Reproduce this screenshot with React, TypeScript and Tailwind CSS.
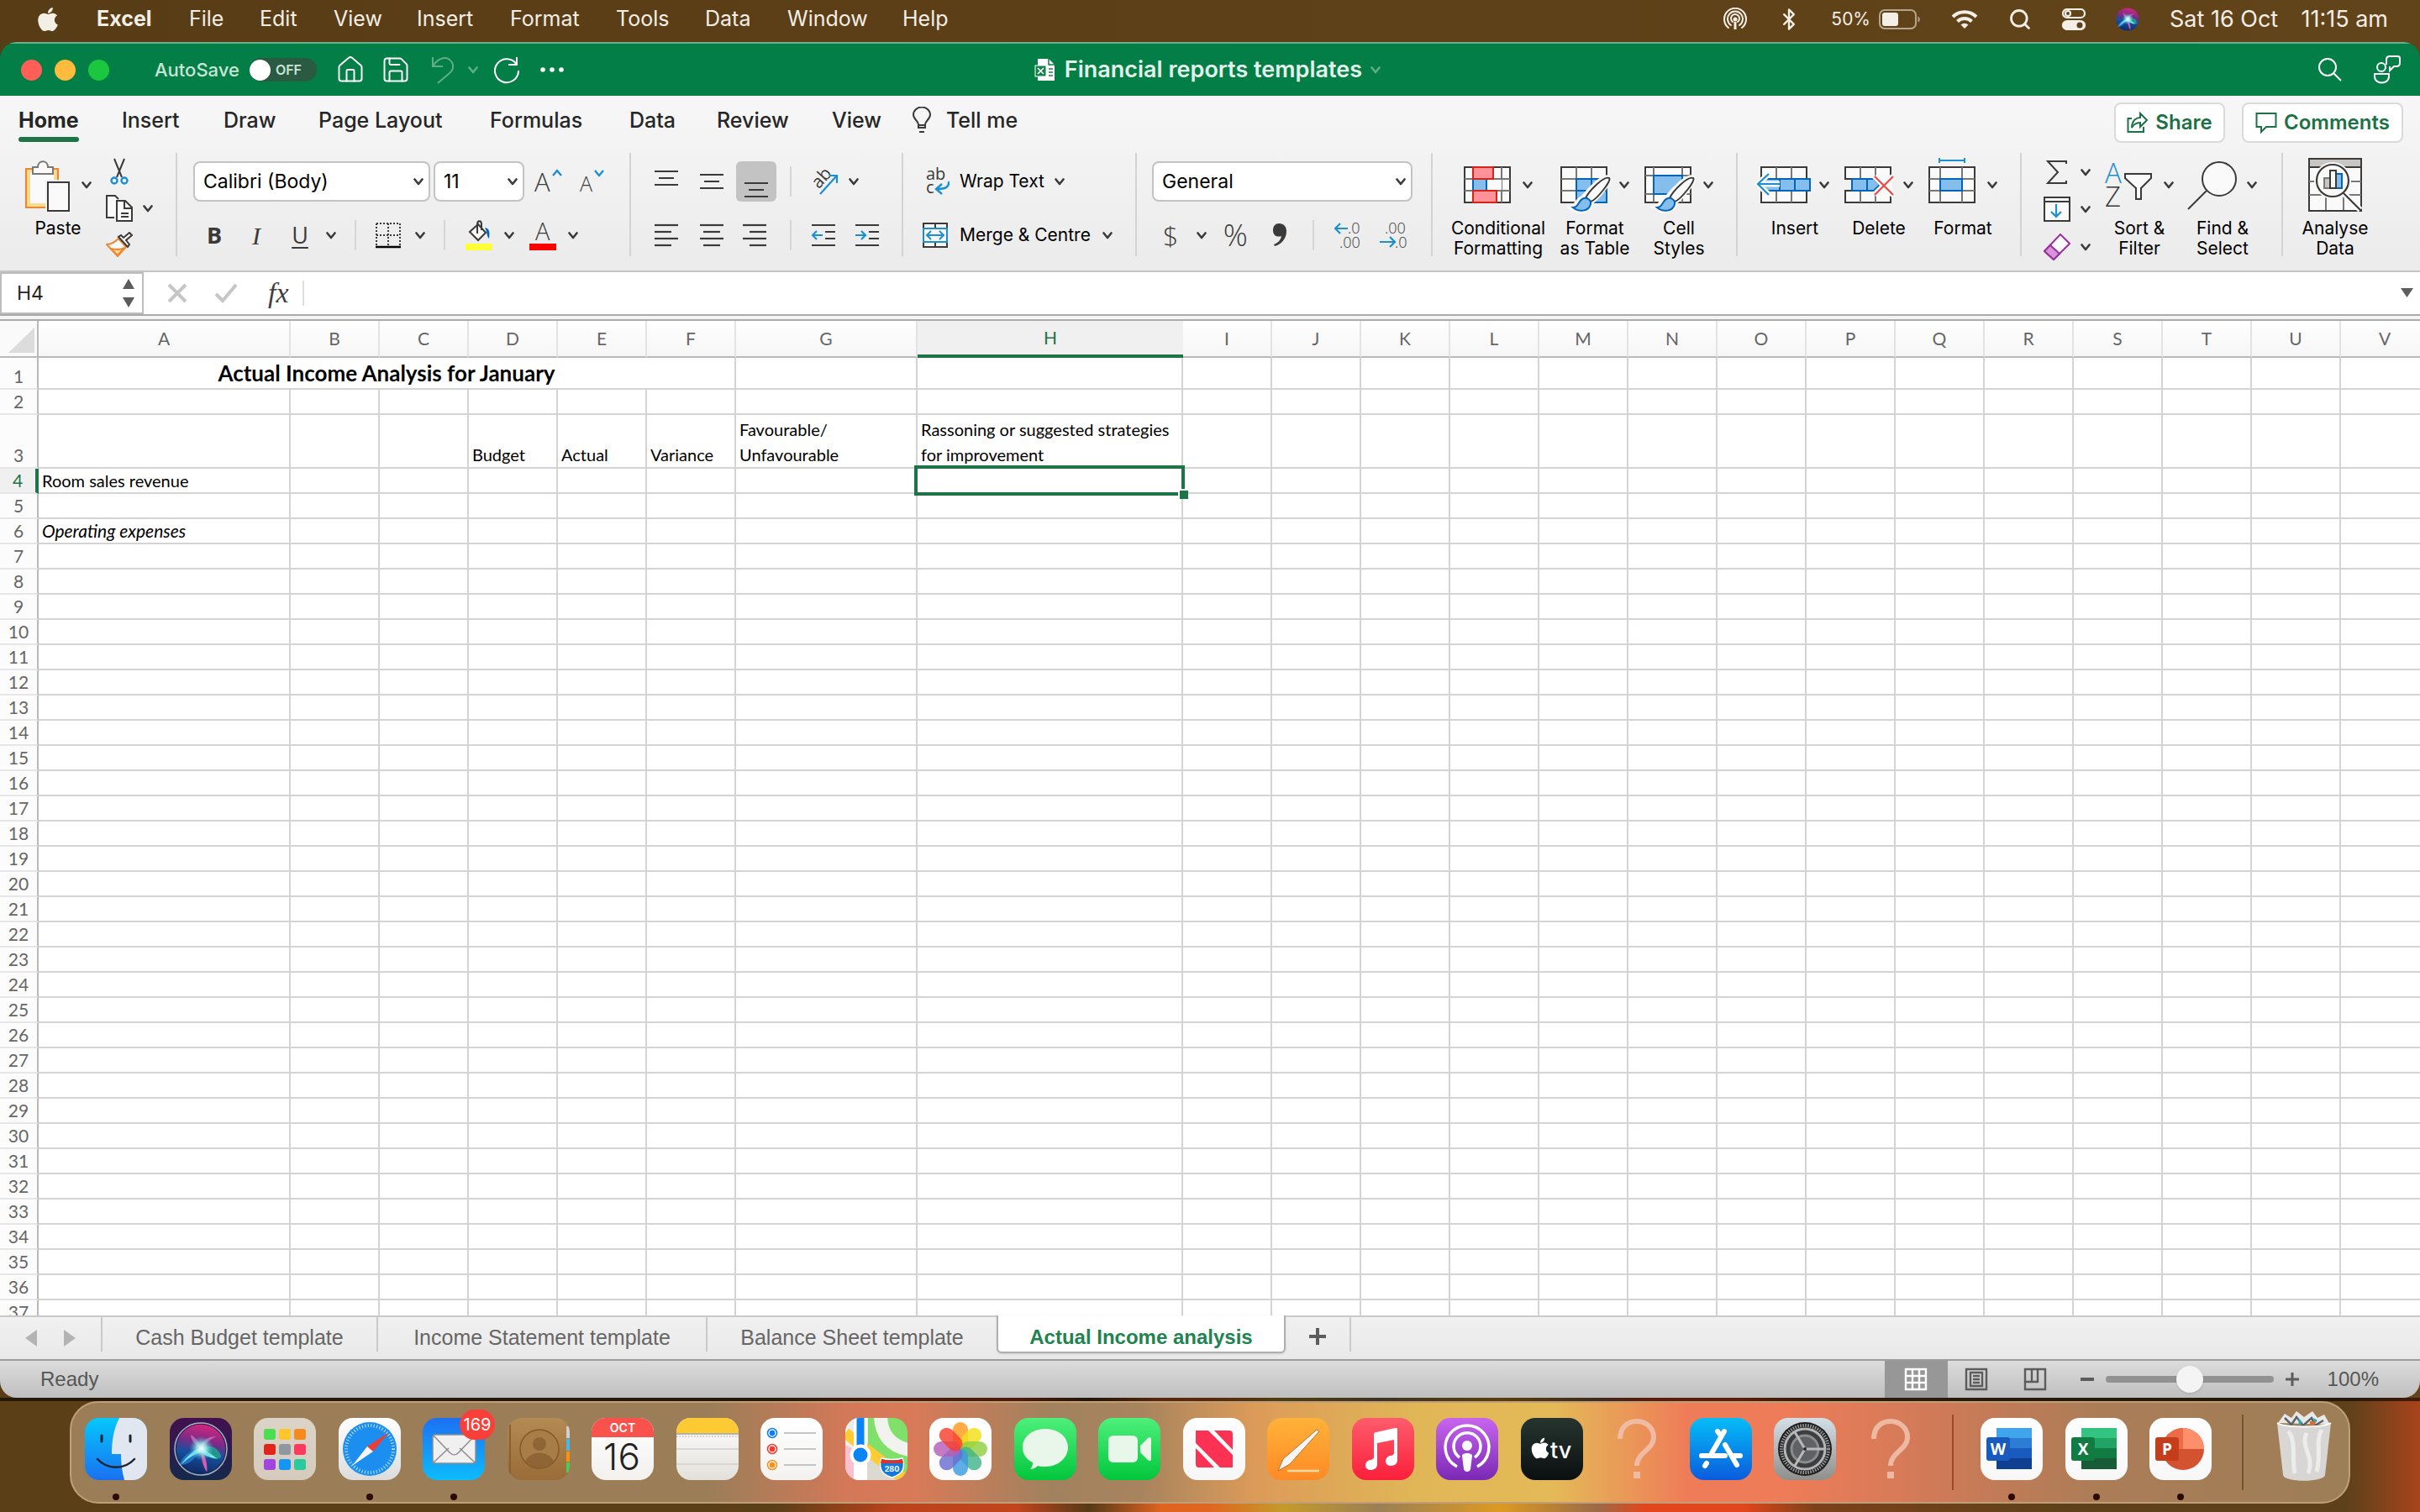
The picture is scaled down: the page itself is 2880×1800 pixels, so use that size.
import { useState, type ReactNode } from "react";
import { FaApple } from "react-icons/fa";
import { Bluetooth, House, Save, Search } from "lucide-react";

interface WidthItem {
  label: string;
  width: string;
}

const DARK = "#3b3a39";
const GREY = "#7a7875";
const PAPER = "#fafafa";
const BLUE = "#1a8fd1";
const NAVY = "#0364b8";
const SKY = "#83beec";

const menus: WidthItem[] = [
  { label: "File", width: "w-[84px]" },
  { label: "Edit", width: "w-[88px]" },
  { label: "View", width: "w-[99px]" },
  { label: "Insert", width: "w-[111px]" },
  { label: "Format", width: "w-[126px]" },
  { label: "Tools", width: "w-[106px]" },
  { label: "Data", width: "w-[98px]" },
  { label: "Window", width: "w-[137px]" },
  { label: "Help", width: "w-[80px]" },
];

const ribbonTabs: WidthItem[] = [
  { label: "Insert", width: "w-[121px]" },
  { label: "Draw", width: "w-[113px]" },
  { label: "Page Layout", width: "w-[204px]" },
  { label: "Formulas", width: "w-[166px]" },
  { label: "Data", width: "w-[104px]" },
  { label: "Review", width: "w-[137px]" },
  { label: "View", width: "w-[96px]" },
];

const columns: WidthItem[] = "ABCDEFGHIJKLMNOPQRSTUV".split("").map((label) => ({
  label,
  width: label === "A" ? "w-[300px]" : label === "G" ? "w-[216px]" : label === "H" ? "w-[316px]" : "w-[106px]",
}));

const cells: Record<string, string> = {
  D3: "Budget",
  E3: "Actual",
  F3: "Variance",
  G3: "Favourable/ Unfavourable",
  H3: "Rassoning or suggested strategies for improvement",
  A4: "Room sales revenue",
  A6: "Operating expenses",
};

/* ---------- small shared pieces ---------- */

function Chevron({ color = DARK }: { color?: string }) {
  return (
    <svg width="12" height="9" viewBox="0 0 12 9" className="shrink-0" fill="none">
      <path d="M1.500 1.500 6 7l4.500-5.500" stroke={color} strokeWidth="2.600" strokeLinecap="round" strokeLinejoin="round" />
    </svg>
  );
}

function Group({ className, children }: { className: string; children: ReactNode }) {
  return <div className={`h-[123px] shrink-0 border-r-2 border-[#d3d3d3] ${className}`}>{children}</div>;
}

function Divider() {
  return <div className="h-9 w-0.5 shrink-0 bg-[#d6d6d6]" />;
}

function BigButton({
  width,
  lines,
  arrow = true,
  iconWidth = 56,
  children,
}: {
  width: string;
  lines: string[];
  arrow?: boolean;
  iconWidth?: number;
  children: ReactNode;
}) {
  return (
    <button type="button" className={`flex shrink-0 flex-col items-center pt-1.5 ${width}`}>
      <span className="flex h-16 items-center gap-3.5">
        <svg width={iconWidth} height="64" viewBox={`0 0 ${iconWidth} 64`} className="overflow-visible" fill="none">
          {children}
        </svg>
        {arrow && <Chevron />}
      </span>
      <span className="mt-2 text-center text-[21px] leading-6 whitespace-nowrap text-black">
        {lines.map((line) => (
          <span key={line} className="block">
            {line}
          </span>
        ))}
      </span>
    </button>
  );
}

function PickList({ label, value, options, width }: { label: string; value: string; options: string[]; width: string }) {
  return (
    <label className={`relative block h-12 shrink-0 ${width}`}>
      <span className="sr-only">{label}</span>
      <select
        defaultValue={value}
        className="h-full w-full appearance-none rounded-lg border-2 border-[#c3c3c3] bg-white pl-2.5 text-[23px] text-black"
      >
        {options.map((option) => (
          <option key={option}>{option}</option>
        ))}
      </select>
      <span className="pointer-events-none absolute top-5 right-2">
        <Chevron />
      </span>
    </label>
  );
}

function AlignIcon({ rows }: { rows: [number, number][] }) {
  return (
    <svg width="28" height="28" viewBox="0 0 28 28" stroke={DARK} strokeWidth="2.200">
      {rows.map(([x, w], i) => (
        <path key={i} d={`M${x} ${2 + i * 8}h${w}`} />
      ))}
    </svg>
  );
}

function Brush() {
  return (
    <g>
      <path d="M59 23c4 3-16 27-22 30-1 12-16 14-26 6 8-1 7-9 15-12C34 37 52 18 59 23z" fill={PAPER} stroke={PAPER} strokeWidth="4" />
      <path d="M58 24c4 2-15 26-22 28l-6-4c4-9 22-27 28-24z" fill={PAPER} stroke={DARK} strokeWidth="2" />
      <path d="M15 59c7 0 6-9 13-11 5-1 9 3 8 7-2 9-14 10-21 4z" fill={SKY} stroke={NAVY} strokeWidth="2" />
    </g>
  );
}

/* ---------- mac menu bar ---------- */

function MenuBar() {
  return (
    <header className="flex h-[50px] shrink-0 items-center pb-1 pl-[43px] pr-[38px] text-[25px] text-[#f3eee6]">
      <FaApple className="mr-11 h-8 w-7" />
      <button type="button" className="w-[110px] text-left font-bold">
        Excel
      </button>
      <nav className="flex">
        {menus.map((m) => (
          <button type="button" key={m.label} className={`text-left ${m.width}`}>
            {m.label}
          </button>
        ))}
      </nav>
      <div className="ml-auto flex items-center gap-9">
        <svg width="28" height="28" viewBox="0 0 28 28" fill="none" stroke="currentColor" strokeWidth="2">
          <path d="M6 24a13 13 0 1 1 16 0M9 21a9 9 0 1 1 10 0M11 17a5 5 0 1 1 6 0" strokeLinecap="round" />
          <circle cx="14" cy="14" r="1.500" fill="currentColor" />
          <path d="M14 17v9" strokeWidth="3" />
        </svg>
        <Bluetooth className="h-8 w-7" strokeWidth={2} />
        <div className="flex items-center gap-2.5 text-[21px]">
          50%
          <svg width="50" height="24" viewBox="0 0 50 24" fill="none">
            <rect x="1" y="1" width="43" height="22" rx="6" stroke="#b5a58e" strokeWidth="2" />
            <rect x="4" y="4" width="19" height="16" rx="3" fill="#f3eee6" />
            <path d="M46.500 8.500c3 1 3 6 0 7z" fill="#b5a58e" />
          </svg>
        </div>
        <svg width="32" height="24" viewBox="0 0 32 24" fill="none" stroke="currentColor" strokeWidth="4">
          <path d="M2 9a20 20 0 0 1 28 0M7.500 14.500a12 12 0 0 1 17 0" />
          <path d="m16 23-4.500-4.500a6.500 6.500 0 0 1 9 0z" fill="currentColor" stroke="none" />
        </svg>
        <Search className="h-7 w-7" strokeWidth={2.4} />
        <svg width="28" height="26" viewBox="0 0 28 26" fill="none" stroke="currentColor" strokeWidth="2.200">
          <rect x="1" y="1" width="26" height="10" rx="5" />
          <circle cx="7" cy="6" r="3" />
          <rect x="1" y="15" width="26" height="10" rx="5" fill="currentColor" />
          <circle cx="21" cy="20" r="3.500" fill="#5d411a" stroke="none" />
        </svg>
        <svg width="28" height="28" viewBox="0 0 74 74">
          <SiriOrb id="menuSiri" />
        </svg>
        <div className="flex w-[260px] justify-between text-[27px]">
          <span>Sat 16 Oct</span>
          <span>11:15 am</span>
        </div>
      </div>
    </header>
  );
}

/* ---------- window title bar ---------- */

function TitleBar() {
  return (
    <div className="flex h-16 shrink-0 items-center border-t-2 border-[#6fae8d] bg-[#037e46] pr-[22px] pl-[25px] text-white">
      <div className="flex gap-[15px]">
        <button type="button" aria-label="Close" className="size-[25px] rounded-full bg-[#ff5f57]" />
        <button type="button" aria-label="Minimise" className="size-[25px] rounded-full bg-[#febb3d]" />
        <button type="button" aria-label="Zoom" className="size-[25px] rounded-full bg-[#1ac73f]" />
      </div>
      <label className="ml-[54px] flex items-center gap-3 text-[22px] font-medium text-[#c9e5d6]">
        AutoSave
        <input type="checkbox" role="switch" className="sr-only" />
        <span className="flex h-7 w-20 items-center rounded-full bg-[#2a5a42] text-[16px] font-semibold">
          <span className="mr-1.5 size-[25px] rounded-full bg-white" />
          OFF
        </span>
      </label>
      <div className="ml-[22px] flex items-center">
        <button type="button" aria-label="Home">
          <House className="mr-[18px] size-9" strokeWidth={1.3} />
        </button>
        <button type="button" aria-label="Save">
          <Save className="mr-6 size-9" strokeWidth={1.3} />
        </button>
        <button type="button" aria-label="Undo" className="flex items-center gap-4">
          <svg width="28" height="34" viewBox="0 0 28 34" fill="none" stroke="#5fae88" strokeWidth="2">
            <path d="M2 2v11h12M2 13C8 3 17 1 22 5c6 5 5 12 0 16L8 33" />
          </svg>
          <Chevron color="#5fae88" />
        </button>
        <button type="button" aria-label="Repeat" className="mr-6 ml-[18px]">
          <svg width="32" height="34" viewBox="0 0 32 34" fill="none" stroke="white" strokeWidth="2">
            <path d="M28 11a14 14 0 1 0 2 7M28 2v9H18" />
          </svg>
        </button>
        <button type="button" aria-label="More">
          <svg width="28" height="6" fill="white">
            <circle cx="3" cy="3" r="2.800" />
            <circle cx="14" cy="3" r="2.800" />
            <circle cx="25" cy="3" r="2.800" />
          </svg>
        </button>
      </div>
      <h1 className="mx-auto flex items-center gap-2.5 text-[27px] font-semibold text-[#e3f2ea]">
        <svg width="26" height="28" viewBox="0 0 26 28">
          <path d="M4 1h13l7 7v19H4z" fill="#fff" />
          <path d="M17 1v7h7" fill="none" stroke="#037e46" strokeWidth="1.500" />
          <rect x="1" y="9" width="13" height="13" fill="#14804a" stroke="#fff" />
          <path d="m4 12 7 7M11 12l-7 7" stroke="#fff" strokeWidth="1.600" />
          <path d="M17 13h5M17 17h5M17 21h5" stroke="#14804a" strokeWidth="1.600" />
        </svg>
        Financial reports templates
        <Chevron color="#5fae88" />
      </h1>
      <div className="flex w-[655px] items-center justify-end gap-9">
        <button type="button" aria-label="Search">
          <svg width="30" height="30" viewBox="0 0 30 30" fill="none" stroke="white" strokeWidth="2">
            <circle cx="12" cy="12" r="10" />
            <path d="m19 19 9 9" />
          </svg>
        </button>
        <button type="button" aria-label="Presence">
          <svg width="34" height="34" viewBox="0 0 34 34" fill="none" stroke="white" strokeWidth="2">
            <circle cx="10" cy="14" r="5" />
            <path d="M2 22h17v3c0 10-17 10-17 0z" />
            <path d="M16 11V5c0-3 1-4 4-4h9c3 0 3 1 3 4v4c0 3-1 4-4 4h-3l-5 5v-5" />
          </svg>
        </button>
      </div>
    </div>
  );
}

/* ---------- ribbon ---------- */

function RibbonTabs() {
  return (
    <div className="flex h-[62px] items-start pr-5 pl-[22px] text-[25px] text-[#262626]">
      <nav className="flex pt-[11px]">
        <div className="w-[123px]">
          <button type="button" className="leading-9 font-bold">
            Home
            <span className="mt-0.5 block h-1.5 rounded-full bg-[#1e7347]" />
          </button>
        </div>
        {ribbonTabs.map((tab) => (
          <button type="button" key={tab.label} className={`self-start text-left leading-9 font-medium ${tab.width}`}>
            {tab.label}
          </button>
        ))}
        <button type="button" className="flex items-center gap-[18px] self-start leading-9 font-medium">
          <svg width="22" height="32" viewBox="0 0 22 32" fill="none" stroke={DARK} strokeWidth="2">
            <path d="M7 25v-4C7 17 1 15 1 9.500a10 9 0 0 1 20 0C21 15 15 17 15 21v4zM7 22h8M8 30h6" />
          </svg>
          Tell me
        </button>
      </nav>
      <div className="ml-auto flex gap-5 pt-2 text-[24px] font-semibold text-[#1c7145]">
        <button type="button" className="flex h-12 w-[132px] items-center justify-center gap-2 rounded-lg border-2 border-[#dadada] bg-white">
          <svg width="26" height="26" viewBox="0 0 26 26" fill="none" stroke="currentColor" strokeWidth="2">
            <path d="M6 8H1.500v16H20v-6M16 2l8 8-8 8v-5c-5 0-8 2-10 6 0-7 4-12 10-12z" />
          </svg>
          Share
        </button>
        <button type="button" className="flex h-12 w-[192px] items-center justify-center gap-2 rounded-lg border-2 border-[#dadada] bg-white">
          <svg width="26" height="26" viewBox="0 0 26 26" fill="none" stroke="currentColor" strokeWidth="2">
            <path d="M1.500 2h23v16H13l-6 6v-6H1.500z" />
          </svg>
          Comments
        </button>
      </div>
    </div>
  );
}

function ClipboardGroup() {
  return (
    <Group className="flex w-[211px] pl-7">
      <BigButton width="w-[82px]" lines={["Paste"]} iconWidth={54}>
        <path d="M2 13h38v46H2z" fill="#f8db8f" stroke="#ee8733" strokeWidth="2.200" />
        <path d="M7 17h28v37H7z" fill={PAPER} />
        <path d="M10 11h6c0-9 12-9 12 0h6v8H10z" fill={PAPER} stroke={GREY} strokeWidth="2" />
        <path d="M25 26h32v40H25z" fill="#f1f1f1" />
        <path d="M28 29h25v34H28z" fill={PAPER} stroke={DARK} strokeWidth="2" />
      </BigButton>
      <div className="flex flex-col gap-3 pt-1.5 pl-4">
        <button type="button" aria-label="Cut">
          <svg width="32" height="32" viewBox="0 0 32 32" fill="none" strokeWidth="2">
            <path d="m10 1 9 22M22 1l-9 22" stroke={DARK} />
            <circle cx="10" cy="27" r="3.500" stroke={BLUE} strokeWidth="2.400" />
            <circle cx="22" cy="27" r="3.500" stroke={BLUE} strokeWidth="2.400" />
          </svg>
        </button>
        <button type="button" aria-label="Copy" className="flex items-center gap-3">
          <svg width="32" height="32" viewBox="0 0 32 32" fill={PAPER} stroke={DARK} strokeWidth="2">
            <path d="M10 27H1V1h10l4 4" />
            <path d="M13 7h10l8 8v16H13z" />
            <path d="M22 7v9h9M18 22h9M18 26h9" fill="none" />
          </svg>
          <Chevron />
        </button>
        <button type="button" aria-label="Format Painter">
          <svg width="32" height="30" viewBox="0 0 32 30" strokeWidth="2">
            <path d="M1 15c5 0 10-3 14-7l9 10-10 11z" fill={PAPER} stroke="#ee8733" />
            <path d="M6 20c6 1 11 2 16-1l-8 9z" fill="#f8db8f" stroke="#ee8733" />
            <path d="m15 6 11 12 2-3-4-5 7-6-3-3-7 6-3-3z" fill={PAPER} stroke={DARK} />
          </svg>
        </button>
      </div>
    </Group>
  );
}

function FontGroup() {
  return (
    <Group className="w-[540px] pt-2.5 pl-[19px]">
      <div className="flex items-center">
        <PickList label="Font" value="Calibri (Body)" options={["Calibri (Body)", "Arial"]} width="mr-1 w-[282px]" />
        <PickList label="Font size" value="11" options={["11", "12", "14"]} width="mr-3 w-[108px]" />
        <button type="button" aria-label="Increase font size" className="mr-[18px]">
          <svg width="34" height="36" viewBox="0 0 34 36" fill="none">
            <text x="0" y="30" fontSize="31" fontFamily="Open Sans" fontWeight="300" fill={DARK}>A</text>
            <path d="m22 11 5-6 5 6" stroke={BLUE} strokeWidth="2.400" />
          </svg>
        </button>
        <button type="button" aria-label="Decrease font size">
          <svg width="34" height="36" viewBox="0 0 34 36" fill="none">
            <text x="2" y="30" fontSize="25" fontFamily="Open Sans" fontWeight="300" fill={DARK}>A</text>
            <path d="m20 5 5 6 5-6" stroke={BLUE} strokeWidth="2.400" />
          </svg>
        </button>
      </div>
      <div className="mt-5 flex h-10 items-center pl-1.5 font-[Open_Sans] text-[27px] text-[#3b3a39]">
        <button type="button" className="w-[38px] font-bold" aria-label="Bold">B</button>
        <button type="button" className="ml-3 w-[38px] font-[Liberation_Serif] text-[30px] italic" aria-label="Italic">I</button>
        <button type="button" className="ml-3.5 w-[38px] underline decoration-2 underline-offset-4" aria-label="Underline">U</button>
        <button type="button" aria-label="Underline styles" className="mr-[22px] ml-3"><Chevron /></button>
        <Divider />
        <button type="button" aria-label="Borders" className="mr-[22px] ml-[22px] flex items-center gap-4">
          <svg width="32" height="32" viewBox="0 0 32 32" fill="none">
            <path d="M2 2h28M2 16h28M2 2v26M16 2v26M30 2v26" stroke={DARK} strokeWidth="2" strokeDasharray="2 2" />
            <path d="M1 30h30" stroke="#000" strokeWidth="2.500" />
          </svg>
          <Chevron />
        </button>
        <Divider />
        <button type="button" aria-label="Fill colour" className="mr-[18px] ml-6 flex items-center gap-3.5">
          <svg width="32" height="36" viewBox="0 0 32 36" fill="none">
            <path d="m5 14 10-9 9 10-9 9z" fill={PAPER} stroke={DARK} strokeWidth="2" />
            <path d="M14 16V5c0-5 5-5 5 0v7" stroke={DARK} strokeWidth="2" />
            <path d="M23 9c6 1 6 6 5 13-3-2-2-8-5-13z" fill={NAVY} />
            <path d="M0 28h32v8H0z" fill="#ffff38" />
          </svg>
          <Chevron />
        </button>
        <button type="button" aria-label="Font colour" className="flex items-center gap-3.5">
          <svg width="32" height="36" viewBox="0 0 32 36">
            <text x="7" y="24" fontSize="29" fontFamily="Open Sans" fontWeight="300" fill={DARK}>A</text>
            <path d="M0 28h32v8H0z" fill="#f00" />
          </svg>
          <Chevron />
        </button>
      </div>
    </Group>
  );
}

function AlignmentGroup() {
  return (
    <Group className="w-[324px] pt-2.5 pl-5">
      <div className="flex h-12 items-center">
        <button type="button" aria-label="Top align" className="w-[54px] pl-2"><AlignIcon rows={[[0, 28], [5, 18], [0, 28]]} /></button>
        <button type="button" aria-label="Middle align" className="w-[51px] pt-2 pl-2"><AlignIcon rows={[[0, 28], [5, 18], [0, 28]]} /></button>
        <button type="button" aria-label="Bottom align" className="mr-4 h-12 w-12 rounded-md bg-[#c3c3c3] pt-6 pl-2.5"><AlignIcon rows={[[0, 28], [5, 18], [0, 28]]} /></button>
        <Divider />
        <button type="button" aria-label="Orientation" className="ml-[22px] flex items-center gap-3">
          <svg width="34" height="34" viewBox="0 0 34 34" fill="none">
            <text x="4" y="24" fontSize="21" fontFamily="Open Sans" fill={DARK} transform="rotate(-48 10 18)">ab</text>
            <path d="m12 32 20-22M23 10h9v9" stroke={BLUE} strokeWidth="2.200" />
          </svg>
          <Chevron />
        </button>
      </div>
      <div className="mt-5 flex h-10 items-center">
        <button type="button" aria-label="Align left" className="w-[54px] pl-2"><AlignIcon rows={[[0, 28], [0, 20], [0, 28], [0, 20]]} /></button>
        <button type="button" aria-label="Centre" className="w-[51px] pl-2"><AlignIcon rows={[[0, 28], [4, 20], [0, 28], [4, 20]]} /></button>
        <button type="button" aria-label="Align right" className="mr-4 w-12 pl-2"><AlignIcon rows={[[0, 28], [8, 20], [0, 28], [8, 20]]} /></button>
        <Divider />
        <button type="button" aria-label="Decrease indent" className="mr-6 ml-6">
          <svg width="28" height="28" viewBox="0 0 28 28" fill="none" stroke={DARK} strokeWidth="2.200">
            <path d="M0 2h28M16 10h12M16 18h12M0 26h28" />
            <path d="M13 14H1M6 9l-5 5 5 5" stroke={BLUE} />
          </svg>
        </button>
        <button type="button" aria-label="Increase indent">
          <svg width="28" height="28" viewBox="0 0 28 28" fill="none" stroke={DARK} strokeWidth="2.200">
            <path d="M0 2h28M16 10h12M16 18h12M0 26h28" />
            <path d="M0 14h12M7 9l5 5-5 5" stroke={BLUE} />
          </svg>
        </button>
      </div>
    </Group>
  );
}

function WrapGroup() {
  return (
    <Group className="w-[278px] pt-2.5 pl-[23px] text-[21px] text-black">
      <button type="button" className="flex h-12 items-center gap-3">
        <svg width="32" height="34" viewBox="0 0 32 34" fill="none">
          <text x="4" y="15" fontSize="20" fontFamily="Open Sans" fill={DARK}>ab</text>
          <text x="4" y="31" fontSize="20" fontFamily="Open Sans" fill={DARK}>c</text>
          <path d="M31 17c1 7-4 9-14 9M23 20l-7 6 7 6" stroke={BLUE} strokeWidth="2.400" />
        </svg>
        Wrap Text
        <Chevron />
      </button>
      <button type="button" className="mt-5 flex h-10 items-center gap-3.5">
        <svg width="30" height="30" viewBox="0 0 30 30" fill={PAPER} strokeWidth="2">
          <path d="M1 1h28v28H1zM15 1v28" stroke={DARK} />
          <path d="M1 7h28v16H1z" stroke={BLUE} />
          <path d="M5 15h20M10 10l-5 5 5 5M20 10l5 5-5 5" stroke={BLUE} fill="none" />
        </svg>
        Merge &amp; Centre
        <Chevron />
      </button>
    </Group>
  );
}

function NumberGroup() {
  return (
    <Group className="w-[352px] pt-2.5 pl-[18px]">
      <PickList label="Number format" value="General" options={["General", "Number", "Currency"]} width="w-[310px]" />
      <div className="mt-5 flex h-10 items-center font-[Open_Sans] text-[32px] font-light text-[#3b3a39]">
        <button type="button" aria-label="Currency" className="ml-[13px] flex items-center gap-[22px]">
          $
          <Chevron />
        </button>
        <button type="button" aria-label="Percent" className="ml-[18px] w-8 text-[36px]">%</button>
        <button type="button" aria-label="Comma style" className="mr-[30px] ml-7">
          <svg width="18" height="28" viewBox="0 0 18 28" fill={DARK}>
            <path d="M8 0c6 0 9 4 9 9 0 9-6 16-14 18l-1-2c5-2 8-5 9-10-6 2-10-1-10-7 0-5 3-8 7-8z" />
          </svg>
        </button>
        <Divider />
        <button type="button" aria-label="Increase decimal" className="mr-5 ml-6">
          <svg width="34" height="34" viewBox="0 0 34 34" fill="none">
            <text x="16" y="15" fontSize="18" fontFamily="Open Sans" fill={DARK}>.0</text>
            <text x="6" y="32" fontSize="18" fontFamily="Open Sans" fill={DARK}>.00</text>
            <path d="M16 9H1M7 3 1 9l6 6" stroke={BLUE} strokeWidth="2.200" />
          </svg>
        </button>
        <button type="button" aria-label="Decrease decimal">
          <svg width="34" height="34" viewBox="0 0 34 34" fill="none">
            <text x="6" y="15" fontSize="18" fontFamily="Open Sans" fill={DARK}>.00</text>
            <text x="18" y="32" fontSize="18" fontFamily="Open Sans" fill={DARK}>.0</text>
            <path d="M0 25h17M12 19l6 6-6 6" stroke={BLUE} strokeWidth="2.200" />
          </svg>
        </button>
      </div>
    </Group>
  );
}

function StylesGroup() {
  return (
    <Group className="flex w-[363px] pl-[19px]">
      <BigButton width="w-[118px]" lines={["Conditional", "Formatting"]}>
        <path d="M1 11h54v42H1z" fill={PAPER} stroke={DARK} strokeWidth="2" />
        <path d="M1 25h54M1 39h54M11 11v42M45 11v42" stroke={GREY} strokeWidth="2" />
        <path d="M28 26h17v12H28z" fill={PAPER} />
        <path d="M11 25h16v14H11z" fill={SKY} stroke={NAVY} strokeWidth="2" />
        <path d="M11 11h24v14H11zM11 39h28v14H11z" fill="#ff9199" stroke="#d92316" strokeWidth="2" />
      </BigButton>
      <BigButton width="w-[112px]" lines={["Format", "as Table"]}>
        <path d="M1 11h54v42H1z" fill={PAPER} stroke={DARK} strokeWidth="2" />
        <path d="M1 25h54M1 39h54M19 11v42M37 11v42" stroke={GREY} strokeWidth="2" />
        <path d="M19 25h36v28H19zM19 39h36M37 25v28" fill={SKY} stroke={NAVY} strokeWidth="2" />
        <Brush />
      </BigButton>
      <BigButton width="w-[88px]" lines={["Cell", "Styles"]}>
        <path d="M1 11h54v42H1z" fill={PAPER} stroke={DARK} strokeWidth="2" />
        <path d="M1 21h54M1 43h54M11 11v42M45 11v42" stroke={GREY} strokeWidth="2" />
        <path d="M11 21h34v22H11z" fill={SKY} stroke={NAVY} strokeWidth="2" />
        <Brush />
      </BigButton>
    </Group>
  );
}

function CellsGroup() {
  return (
    <Group className="flex w-[338px] pl-[18px]">
      <BigButton width="w-[100px]" lines={["Insert"]}>
        <path d="M1 11h54v42H1z" fill={PAPER} stroke={DARK} strokeWidth="2" />
        <path d="M19 11v42M37 11v42" stroke={GREY} strokeWidth="2" />
        <path d="M5 25h54v14H5zM23 25v14M41 25v14" fill={SKY} stroke={NAVY} strokeWidth="2" />
        <path d="M23 31H-2M10 19-3 31l13 13" stroke={PAPER} strokeWidth="7" />
        <path d="M23 31H-2M10 19-3 31l13 13" stroke={BLUE} strokeWidth="2.200" />
      </BigButton>
      <BigButton width="w-[100px]" lines={["Delete"]}>
        <path d="M1 11h54v42H1V39h8V25H1z" fill={PAPER} stroke={DARK} strokeWidth="2" />
        <path d="M19 11v14M37 11v14M19 39v14M37 39v14" stroke={GREY} strokeWidth="2" />
        <path d="M42 26h15v12H42z" fill={PAPER} />
        <path d="M9 25h26l7 7-7 7H9zM27 25v14" fill={SKY} stroke={NAVY} strokeWidth="2" />
        <path d="m36 22 22 22M58 22 36 44" stroke={PAPER} strokeWidth="7" />
        <path d="m36 22 22 22M58 22 36 44" stroke="#f04747" strokeWidth="2.200" />
      </BigButton>
      <BigButton width="w-[100px]" lines={["Format"]}>
        <path d="M1 11h54v42H1z" fill={PAPER} stroke={DARK} strokeWidth="2" />
        <path d="M1 25h54M1 39h54M14 11v42M40 11v42" stroke={GREY} strokeWidth="2" />
        <path d="M14 25h26v14H14z" fill={SKY} stroke={NAVY} strokeWidth="2" />
        <path d="M13 3h30M13 0v6M43 0v6" stroke={BLUE} strokeWidth="2" />
      </BigButton>
    </Group>
  );
}

function EditingGroup() {
  return (
    <Group className="flex w-[311px] pl-[26px]">
      <div className="mr-2 flex w-14 flex-col gap-[14px] pt-2">
        <button type="button" aria-label="AutoSum" className="flex items-center gap-3">
          <svg width="32" height="30" viewBox="0 0 32 30" fill="none" stroke={DARK} strokeWidth="2">
            <path d="M27 5V2H5l12 13L5 28h22v-3" />
          </svg>
          <Chevron />
        </button>
        <button type="button" aria-label="Fill" className="flex items-center gap-3">
          <svg width="32" height="30" viewBox="0 0 32 30" fill={PAPER} stroke={DARK} strokeWidth="2">
            <path d="M1 1h30v28H1zM1 6h30" />
            <path d="M15 9v15M9 18l6 6 6-6" stroke={BLUE} fill="none" strokeWidth="2.200" />
          </svg>
          <Chevron />
        </button>
        <button type="button" aria-label="Clear" className="flex items-center gap-3">
          <svg width="32" height="32" viewBox="0 0 32 32" stroke="#9a2fa0" strokeWidth="2">
            <path d="m1 21 19-20 11 11-19 19z" fill={PAPER} />
            <path d="m1 21 7-7 11 10-7 7z" fill="#d893d9" />
          </svg>
          <Chevron />
        </button>
      </div>
      <BigButton width="w-[100px]" lines={["Sort &", "Filter"]}>
        <text x="0" y="30" fontSize="33" fontFamily="Open Sans" fontWeight="300" fill={BLUE}>A</text>
        <text x="0" y="58" fontSize="33" fontFamily="Open Sans" fontWeight="300" fill={DARK}>Z</text>
        <path d="M24 19h31v5L43 36v13h-6V36L24 24z" fill={PAPER} stroke={DARK} strokeWidth="2" />
      </BigButton>
      <BigButton width="w-[98px]" lines={["Find &", "Select"]}>
        <circle cx="37" cy="25" r="20" fill={PAPER} stroke={DARK} strokeWidth="2" />
        <path d="M22 39 0 61" stroke={DARK} strokeWidth="2" />
      </BigButton>
    </Group>
  );
}

function AnalyseButton() {
  return (
    <div className="pl-3">
      <BigButton width="w-[100px]" lines={["Analyse", "Data"]} arrow={false} iconWidth={64}>
        <path d="M1 1h62v62H1z" fill={PAPER} stroke={DARK} strokeWidth="2" />
        <path d="M2 2h60v8H2z" fill="#c8c6c4" />
        <path d="M1 11h62" stroke={DARK} strokeWidth="2" />
        <path d="M1 28h62M1 44h62M21 44v18M42 44v18" stroke={GREY} strokeWidth="2" />
        <circle cx="29" cy="27" r="22" fill={PAPER} />
        <path d="m42 42 20 20" stroke={PAPER} strokeWidth="7" />
        <circle cx="29" cy="27" r="19" fill={PAPER} stroke={DARK} strokeWidth="2.200" />
        <path d="m42 42 21 21" stroke={DARK} strokeWidth="2.200" />
        <path d="M19 24h7v12h-7z" fill="#c8c6c4" stroke={GREY} strokeWidth="2" />
        <path d="M33 19h7v17h-7z" fill={SKY} stroke={NAVY} strokeWidth="2" />
        <path d="M26 15h7v21h-7z" fill={PAPER} stroke={DARK} strokeWidth="2" />
      </BigButton>
    </div>
  );
}

/* ---------- formula bar ---------- */

function FormulaBar() {
  return (
    <div className="flex h-[54px] shrink-0 items-stretch border-y-2 border-t-[#c4c4c4] border-b-[#a9a9a9] bg-white">
      <div className="flex w-[171px] items-center justify-between border-2 border-[#bdbdbd] pr-2 pl-[18px]">
        <input aria-label="Name box" defaultValue="H4" className="w-24 text-[23px] text-[#262626]" />
        <svg width="16" height="36" viewBox="0 0 16 36" fill="#5c5c5c">
          <path d="m8 1 7 12H1zM8 35l7-12H1z" />
        </svg>
      </div>
      <div className="flex items-center gap-8 pr-4 pl-7">
        <button type="button" aria-label="Cancel">
          <svg width="24" height="24" viewBox="0 0 24 24" stroke="#c6c6c6" strokeWidth="4">
            <path d="m2 2 20 20M22 2 2 22" />
          </svg>
        </button>
        <button type="button" aria-label="Enter">
          <svg width="28" height="24" viewBox="0 0 28 24" fill="none" stroke="#c6c6c6" strokeWidth="4">
            <path d="m2 13 8 8L26 2" />
          </svg>
        </button>
        <button type="button" aria-label="Insert function" className="pl-1 font-[Liberation_Serif] text-[34px] leading-none text-[#3f3f3f] italic">
          fx
        </button>
      </div>
      <div className="my-2.5 w-0.5 bg-[#dedede]" />
      <input aria-label="Formula" className="min-w-0 flex-1 bg-white px-3 text-[22px]" />
      <button type="button" aria-label="Expand formula bar" className="px-2">
        <svg width="15" height="12" fill="#5c5c5c">
          <path d="M0 0h15L7.500 11z" />
        </svg>
      </button>
    </div>
  );
}

/* ---------- grid ---------- */

function Sheet() {
  const rows = Array.from({ length: 37 }, (_, i) => i + 1);
  return (
    <div className="min-h-0 flex-1 overflow-hidden border-t-2 border-[#ababab] bg-white font-[Lato]">
      <table className="w-full table-fixed border-separate border-spacing-0 text-[20px] text-black">
        <colgroup>
          <col className="w-[46px]" />
          {columns.map((c) => (
            <col key={c.label} className={c.width} />
          ))}
        </colgroup>
        <thead>
          <tr className="h-11 text-[21px] text-[#666]">
            <th className="border-r-2 border-b-2 border-[#b9b9b9] bg-[#fafafa] p-0">
              <svg width="32" height="30" className="mt-1 ml-2.5" fill="#dcdcdc">
                <path d="M31 0v30H0z" />
              </svg>
            </th>
            {columns.map((c) => (
              <th
                key={c.label}
                scope="col"
                className={
                  c.label === "H"
                    ? "border-b-4 border-[#1e7347] bg-[#f0f0f0] p-0 font-normal text-[#1e7347]"
                    : "border-r-2 border-b-2 border-r-[#e3e3e3] border-b-[#b9b9b9] bg-gradient-to-b from-white to-[#f6f6f6] p-0 font-normal"
                }
              >
                {c.label}
              </th>
            ))}
          </tr>
        </thead>
        <tbody>
          {rows.map((row) => (
            <tr key={row} className={row === 1 ? "h-[38px]" : row === 3 ? "h-16" : "h-[30px]"}>
              <th
                scope="row"
                className={
                  row === 4
                    ? "border-r-4 border-b-2 border-r-[#1e7347] border-b-[#e6e6e6] bg-[#f0f0f0] p-0 align-bottom text-[21px] leading-7 font-normal text-[#1e7347]"
                    : "border-r-2 border-b-2 border-r-[#b9b9b9] border-b-[#e6e6e6] bg-[#fcfcfc] p-0 align-bottom text-[21px] leading-7 font-normal text-[#666]"
                }
              >
                {row}
              </th>
              {columns.map((c, i) => {
                const id = `${c.label}${row}`;
                if (row === 1 && i > 0 && i < 6) return null;
                if (id === "A1") {
                  return (
                    <td key={id} colSpan={6} className="border-r-2 border-b-2 border-[#d4d4d4] p-0 text-center text-[26px] leading-9 font-bold">
                      Actual Income Analysis for January
                    </td>
                  );
                }
                return (
                  <td
                    key={id}
                    className={`border-r-2 border-b-2 border-[#d4d4d4] py-0 pr-0 pl-1 align-bottom ${
                      row === 3 ? "leading-[30px]" : "leading-7"
                    } ${row === 6 ? "text-[21px] italic" : ""} ${id === "H4" ? "relative" : ""}`}
                  >
                    {cells[id]}
                    {id === "H4" && (
                      <span className="absolute -inset-1 z-10 border-4 border-[#1e7347]">
                        <span className="absolute -right-2 -bottom-2 size-3 border-t-2 border-l-2 border-white bg-[#1e7347]" />
                      </span>
                    )}
                  </td>
                );
              })}
            </tr>
          ))}
        </tbody>
      </table>
    </div>
  );
}

/* ---------- sheet tabs and status bar ---------- */

function SheetTabs() {
  const [active, setActive] = useState("Actual Income analysis");
  const tabs: WidthItem[] = [
    { label: "Cash Budget template", width: "w-[328px]" },
    { label: "Income Statement template", width: "w-[392px]" },
    { label: "Balance Sheet template", width: "w-[346px]" },
    { label: "Actual Income analysis", width: "w-[344px]" },
  ];
  return (
    <div className="flex h-[54px] shrink-0 border-b-2 border-[#9c9c9c] bg-gradient-to-b from-[#f1f1f1] to-[#e9e9e9] font-[Liberation_Sans] text-[#666]">
      <div className="flex w-[120px] items-center gap-8 border-t-2 border-[#cacaca] pl-[30px]">
        <button type="button" aria-label="Previous sheet">
          <svg width="14" height="20" fill="#b3b3b3"><path d="M14 0v20L0 10z" /></svg>
        </button>
        <button type="button" aria-label="Next sheet">
          <svg width="14" height="20" fill="#b3b3b3"><path d="M0 0v20l14-10z" /></svg>
        </button>
      </div>
      {tabs.map((tab) => (
        <button
          type="button"
          key={tab.label}
          onClick={() => setActive(tab.label)}
          className={
            tab.label === active
              ? `h-[45px] rounded-b-md border-x-2 border-b-2 border-[#b0b0b0] bg-white pt-2 text-[24px] font-bold text-[#21834f] shadow-sm ${tab.width}`
              : `h-[43px] border-t-2 border-l-2 border-[#cacaca] pt-1.5 text-[25px] ${tab.width}`
          }
        >
          {tab.label}
        </button>
      ))}
      <button type="button" aria-label="Add sheet" className="flex h-[43px] w-[78px] items-center justify-center border-t-2 border-r-2 border-[#cacaca] pt-1">
        <svg width="20" height="20" stroke="#5c5c5c" strokeWidth="4"><path d="M10 0v20M0 10h20" /></svg>
      </button>
      <div className="flex-1 border-t-2 border-[#cacaca]" />
    </div>
  );
}

function StatusBar() {
  return (
    <footer className="flex h-11 shrink-0 items-center bg-gradient-to-b from-[#dcdcdc] to-[#bfbfbf] pr-[49px] pl-12 font-[Liberation_Sans] text-[24px] text-[#565656]">
      <span>Ready</span>
      <button type="button" aria-label="Normal view" className="mr-5 ml-auto flex h-full w-[75px] items-center justify-center bg-[#979797]">
        <svg width="28" height="28" fill="none" stroke="#fff" strokeWidth="2.400">
          <path d="M2 2h24v24H2zM10 2v24M18 2v24M2 10h24M2 18h24" />
        </svg>
      </button>
      <button type="button" aria-label="Page layout view" className="mr-[42px]">
        <svg width="28" height="28" fill="none" stroke="#5c5c5c" strokeWidth="2.400">
          <path d="M2 2h24v24H2zM7 6h14v16H7zM10 10h8M10 14h8M10 18h8" />
        </svg>
      </button>
      <button type="button" aria-label="Page break view" className="mr-10">
        <svg width="28" height="28" fill="none" stroke="#5c5c5c" strokeWidth="2.400">
          <path d="M2 2h24v24H2zM10 2v15M2 17h15V2" />
        </svg>
      </button>
      <button type="button" aria-label="Zoom out" className="mr-3.5">
        <svg width="16" height="16" stroke="#5c5c5c" strokeWidth="4"><path d="M0 8h16" /></svg>
      </button>
      <input
        type="range"
        aria-label="Zoom"
        defaultValue={50}
        className="h-2 w-[200px] appearance-none rounded-full bg-[#929292] [&::-webkit-slider-thumb]:size-8 [&::-webkit-slider-thumb]:appearance-none [&::-webkit-slider-thumb]:rounded-full [&::-webkit-slider-thumb]:bg-[#f4f4f4] [&::-webkit-slider-thumb]:shadow"
      />
      <button type="button" aria-label="Zoom in" className="mr-[34px] ml-3.5">
        <svg width="16" height="16" stroke="#5c5c5c" strokeWidth="3"><path d="M8 0v16M0 8h16" /></svg>
      </button>
      <span>100%</span>
    </footer>
  );
}

/* ---------- dock ---------- */

function SiriOrb({ id }: { id: string }) {
  return (
    <g>
      <defs>
        <linearGradient id={id} x1=".6" y1="0" x2=".4" y2="1">
          <stop offset="0" stopColor="#d4267f" />
          <stop offset=".35" stopColor="#7d2a86" />
          <stop offset=".6" stopColor="#174f9c" />
          <stop offset="1" stopColor="#0e2a66" />
        </linearGradient>
        <radialGradient id={`${id}Glow`}>
          <stop offset="0" stopColor="#fff" />
          <stop offset=".4" stopColor="#a8f6f4" stopOpacity=".8" />
          <stop offset="1" stopColor="#2bb9d8" stopOpacity="0" />
        </radialGradient>
      </defs>
      <circle cx="37" cy="37" r="36" fill={`url(#${id})`} />
      <path d="M37 36c14-6 26-2 30 12-5 6-12 4-17 0-5-4-8-8-13-12z" fill="#1fb08c" opacity=".75" />
      <path d="M5 60c6-14 18-22 32-24-6 14-18 26-32 24z" fill="#2587e0" opacity=".7" />
      <path d="M8 60c8-12 18-20 29-26l24 17c-8 0-18-4-24-9-8 2-18 8-29 18z" fill="#8af8ee" opacity=".85" />
      <path d="M37 37c7 10 10 22 9 34-6-8-9-22-9-34z" fill="#f05fb4" opacity=".9" />
      <path d="M22 16c8 4 14 12 15 21-7-4-14-12-15-21zM37 37c-1-10 10-19 22-18-9 4-15 10-22 18z" fill="#d98ac8" opacity=".6" />
      <circle cx="38" cy="36" r="18" fill={`url(#${id}Glow)`} />
    </g>
  );
}

interface DockApp {
  name: string;
  from?: string;
  to?: string;
  running?: boolean;
  badge?: string;
  art: ReactNode;
}

const petals = ["#ff9a1f", "#f3df1a", "#8fcf3f", "#43b48a", "#3b9be0", "#6a6ed0", "#b45fb8", "#f7402f"];

const dockApps: DockApp[] = [
  {
    name: "Finder",
    from: "#05c8fd",
    to: "#1a70f0",
    running: true,
    art: (
      <g fill="none">
        <path d="M41 0c-7 14-9 28-9 43h11c0 10 1 21 4 31h27V0z" fill="#e1e7f0" />
        <path d="M20 21v7M54 21v7" stroke="#1c2430" strokeWidth="3" strokeLinecap="round" />
        <path d="M15 49c12 13 32 13 44 0" stroke="#1c2430" strokeWidth="2.500" strokeLinecap="round" />
      </g>
    ),
  },
  {
    name: "Siri",
    from: "#43104f",
    to: "#14294b",
    art: (
      <g>
        <g transform="translate(7 7) scale(.81)"><SiriOrb id="dockSiri" /></g>
        <circle cx="37" cy="37" r="31" fill="none" stroke="#9fb6c4" strokeWidth="1.500" />
      </g>
    ),
  },
  {
    name: "Launchpad",
    from: "#dcd4c8",
    to: "#d4cbbd",
    art: (
      <g>
        {["#4ddd50", "#fcc62c", "#f58b1e", "#e0261c", "#8f989f", "#fb3a5d", "#a045dd", "#1596f5", "#2cc8a0"].map((c, i) => (
          <rect key={c} x={12 + (i % 3) * 18} y={13 + Math.floor(i / 3) * 18} width="14" height="13" rx="3" fill={c} />
        ))}
      </g>
    ),
  },
  {
    name: "Safari",
    from: "#ffffff",
    to: "#dcdcdc",
    running: true,
    art: (
      <g>
        <circle cx="37" cy="37" r="32" fill="#1c8ef0" />
        <circle cx="37" cy="37" r="28" fill="none" stroke="#bfe3fb" strokeWidth="4" strokeDasharray="1 2.500" />
        <path d="m60 17-26 17 7 6z" fill="#f23b33" />
        <path d="m16 57 18-23 7 6z" fill="#f4f4f4" />
      </g>
    ),
  },
  {
    name: "Mail",
    from: "#1c70f2",
    to: "#0cbcfd",
    running: true,
    badge: "169",
    art: (
      <g stroke="#8d8d8d" strokeWidth="1.500">
        <rect x="12" y="20" width="51" height="34" rx="3" fill="#f0f0f0" />
        <path d="m13 53 18-17M62 53 44 36M13 21l19 20c4 4 7 4 11 0l19-20" fill="none" />
      </g>
    ),
  },
  {
    name: "Contacts",
    from: "#b48a53",
    to: "#9a6c37",
    art: (
      <g>
        <path d="M70 10h4v14h-4z" fill="#d0d0d0" />
        <path d="M70 25h4v14h-4z" fill="#49b7e8" />
        <path d="M70 40h4v12h-4z" fill="#ff9110" />
        <path d="M70 53h4v12h-4z" fill="#42d25a" />
        <path d="M3 8v58" stroke="#8a602f" strokeWidth="2" />
        <circle cx="38" cy="37" r="23" fill="#a87d47" stroke="#83592a" strokeWidth="1.500" />
        <circle cx="38" cy="31" r="8" fill="#906535" />
        <path d="M21 52c6-14 28-14 34 0a23 23 0 0 1-34 0z" fill="#906535" />
      </g>
    ),
  },
  {
    name: "Calendar",
    from: "#ffffff",
    to: "#f2f1ee",
    art: (
      <g textAnchor="middle" fontFamily="Inter">
        <path d="M0 0h74v23H0z" fill="#f9524c" />
        <text x="37" y="17" fontSize="14" fontWeight="600" fill="#fff">OCT</text>
        <text x="36" y="62" fontSize="44" fontWeight="300" fill="#222">16</text>
      </g>
    ),
  },
  {
    name: "Notes",
    from: "#ffffff",
    to: "#e3e0da",
    art: (
      <g>
        <path d="M0 0h74v18H0z" fill="#fdca33" />
        <path d="M0 19h74" stroke="#a59b85" strokeWidth="1.500" />
        <path d="M0 22h74" stroke="#b9b9b9" strokeWidth="1.500" strokeDasharray="1.500 2" />
        <path d="M0 37h74M0 55h74" stroke="#cfcfcf" strokeWidth="1.500" />
      </g>
    ),
  },
  {
    name: "Reminders",
    from: "#ffffff",
    to: "#f3f2f0",
    art: (
      <g>
        {["#0a7cf5", "#f5392f", "#f79317"].map((c, i) => (
          <g key={c} stroke={c}>
            <circle cx="14" cy={18 + i * 19} r="5.500" fill="none" strokeWidth="1.500" />
            <circle cx="14" cy={18 + i * 19} r="3" fill={c} />
            <path d={`M28 ${18 + i * 19}h38`} stroke="#b3b3b8" strokeWidth="1.500" />
          </g>
        ))}
      </g>
    ),
  },
  {
    name: "Maps",
    from: "#7fe06a",
    to: "#7fe06a",
    art: (
      <g>
        <path d="M0 0h27v74H0z" fill="#ececea" />
        <path d="M0 32 22 44v30H0z" fill="#fbc0cf" />
        <path d="M26 38 74 74H26z" fill="#dcd9d0" />
        <path d="M42-4c0 24 12 38 34 42" fill="none" stroke="#f2f2ee" strokeWidth="16" />
        <path d="M0 18 72 74" stroke="#fccb35" strokeWidth="13" />
        <path d="M10 0h16v74H10z" fill="#fff" />
        <path d="M18 0v40" stroke="#0a84f5" strokeWidth="9" />
        <circle cx="18" cy="44" r="10.500" fill="#0a84f5" stroke="#fff" strokeWidth="4" />
        <path d="M43 48c7 2 18 2 25 0 4 12 0 19-12.500 23C43 67 39 60 43 48z" fill="#1479d8" stroke="#fff" strokeWidth="1.500" />
        <path d="M43 49c7 2 18 2 25 0l1 5H42z" fill="#e0322b" />
        <text x="55.500" y="64" fontSize="9" fontWeight="700" fontFamily="Inter" textAnchor="middle" fill="#fff">280</text>
      </g>
    ),
  },
  {
    name: "Photos",
    from: "#ffffff",
    to: "#fbfbfb",
    art: (
      <g>
        {petals.map((c, i) => (
          <rect key={c} x="28" y="5" width="18" height="32" rx="9" fill={c} opacity=".82" transform={`rotate(${i * 45} 37 37)`} />
        ))}
      </g>
    ),
  },
  {
    name: "Messages",
    from: "#4df07a",
    to: "#02c63c",
    art: <path d="M37 13c16 0 27 10 27 22S53 58 37 58c-3 0-6 0-9-1-2 2-5 4-9 4 2-2 3-5 3-8-8-4-12-10-12-18 0-12 11-22 27-22z" fill="#e9f7ea" />,
  },
  {
    name: "FaceTime",
    from: "#4df07a",
    to: "#02c63c",
    art: <path d="M19 21h21c5 0 7 2 7 7v18c0 5-2 7-7 7H19c-5 0-7-2-7-7V28c0-5 2-7 7-7zM50 33l9-9c2-2 4-1 4 1v24c0 2-2 3-4 1l-9-9z" fill="#e9f7ea" />,
  },
  {
    name: "News",
    from: "#ffffff",
    to: "#f6f6f6",
    art: (
      <g fill="#fb3253">
        <path d="M15 15h15l29 29v15H44L15 30zM15 36l22 23H20c-4 0-5-1-5-5zM37 15h17c4 0 5 1 5 5v18z" />
      </g>
    ),
  },
  {
    name: "Pages",
    from: "#ffb23a",
    to: "#fe8a25",
    art: (
      <g>
        <path d="m59 14 3 2-35 39-14 8 6-14z" fill="#f5f5f5" stroke="#b5702a" />
        <path d="M24 63h38" stroke="#ffd9a5" strokeWidth="2.500" />
      </g>
    ),
  },
  {
    name: "Music",
    from: "#fd5c6c",
    to: "#fb1f3b",
    art: <path d="M26 20c0-2 1-3 3-3l22-5c2 0 3 0 3 2v36c0 5-4 7-8 7-8 0-8-11 0-12 3-1 4-1 4-4V26l-20 4v25c0 5-4 7-8 7-8 0-8-11 0-12 3-1 4-1 4-4z" fill="#fff" />,
  },
  {
    name: "Podcasts",
    from: "#c865ee",
    to: "#7a29b5",
    art: (
      <g fill="none" stroke="#fff" strokeWidth="3.500">
        <path d="M25 58a26 26 0 1 1 24 0" />
        <path d="M28 47a16 16 0 1 1 18 0" />
        <circle cx="37" cy="33" r="6" fill="#fff" stroke="none" />
        <path d="M31 45c0-4 12-4 12 0l-2 16c-1 4-7 4-8 0z" fill="#fff" stroke="none" />
      </g>
    ),
  },
  {
    name: "TV",
    from: "#26352f",
    to: "#0b0f10",
    art: (
      <g fill="#fff">
        <FaApple x="9" y="22" size={28} color="#fff" />
        <text x="35" y="48" fontSize="27" fontFamily="Inter" fontWeight="500">tv</text>
      </g>
    ),
  },
  { name: "Missing app", art: <QuestionMark /> },
  {
    name: "App Store",
    from: "#06bdf8",
    to: "#0a5cdc",
    art: (
      <path d="M41 16 26 42M33 16l3 4M42 32l14 24M14 45h28M52 45h8M20 54l-2 3" stroke="#fff" strokeWidth="6" strokeLinecap="round" />
    ),
  },
  {
    name: "System Preferences",
    from: "#d3dfe7",
    to: "#8f8f8c",
    art: (
      <g fill="none">
        <circle cx="37" cy="37" r="32" fill="#1f1f1f" />
        <circle cx="37" cy="37" r="28" stroke="#9a9a9a" strokeWidth="4" strokeDasharray="1.500 1.500" />
        <circle cx="37" cy="37" r="24" fill="#3c3e40" stroke="#b5b5b5" strokeWidth="3" />
        <circle cx="37" cy="37" r="16" fill="#5f6264" stroke="#8c8c8c" strokeWidth="3" />
        <path d="M37 37h24M37 37 25 17M37 37 25 57" stroke="#b9b9b9" strokeWidth="3" />
        <circle cx="37" cy="37" r="2" fill="#2b2b2b" />
      </g>
    ),
  },
  { name: "Missing app 2", art: <QuestionMark /> },
];

const officeApps: DockApp[] = [
  { name: "Word", from: "#ffffff", to: "#f7f7f7", running: true, art: <OfficeArt letter="W" shades={["#41a5ee", "#2b7cd3", "#185abd", "#103f91"]} badge="#185abd" /> },
  { name: "Excel", from: "#ffffff", to: "#f7f7f7", running: true, art: <OfficeArt letter="X" shades={["#33c481", "#21a366", "#107c41", "#185c37"]} badge="#107c41" /> },
  {
    name: "PowerPoint",
    from: "#ffffff",
    to: "#f7f7f7",
    running: true,
    art: (
      <g>
        <circle cx="40" cy="37" r="25" fill="#d35230" />
        <path d="M40 12a25 25 0 0 1 25 25H40z" fill="#ff8f6b" />
        <path d="M40 12a25 25 0 0 0-25 25h25z" fill="#ed6c47" />
        <OfficeBadge letter="P" color="#c43e1c" />
      </g>
    ),
  },
];

function QuestionMark() {
  return (
    <g fill="none" stroke="#f0c0ac" strokeWidth="6" opacity=".9">
      <path d="M18 25C18 11 27 4 38 4s20 8 20 19c0 15-20 18-20 34" />
      <path d="M38 64v8" strokeWidth="8" />
    </g>
  );
}

function OfficeBadge({ letter, color }: { letter: string; color: string }) {
  return (
    <g>
      <rect x="7" y="23" width="28" height="28" rx="3" fill={color} />
      <text x="21" y="44" fontSize="19" fontWeight="700" fontFamily="Open Sans" textAnchor="middle" fill="#fff">
        {letter}
      </text>
    </g>
  );
}

function OfficeArt({ letter, shades, badge }: { letter: string; shades: string[]; badge: string }) {
  return (
    <g>
      {shades.map((s, i) => (
        <path key={s} d={`M19 ${12 + i * 12}h42v13H19z`} fill={s} />
      ))}
      <OfficeBadge letter={letter} color={badge} />
    </g>
  );
}

function DockIcon({ app }: { app: DockApp }) {
  const id = app.name.replace(/ /g, "");
  return (
    <button type="button" aria-label={app.name} className="relative flex shrink-0 flex-col items-center">
      <svg width="74" height="74" viewBox="0 0 74 74">
        <defs>
          <linearGradient id={id} x1="0" y1="0" x2="0" y2="1">
            <stop offset="0" stopColor={app.from} />
            <stop offset="1" stopColor={app.to} />
          </linearGradient>
          <clipPath id={`${id}Clip`}>
            <rect width="74" height="74" rx="17" />
          </clipPath>
        </defs>
        {app.from ? (
          <g clipPath={`url(#${id}Clip)`}>
            <rect width="74" height="74" fill={`url(#${id})`} />
            {app.art}
          </g>
        ) : (
          app.art
        )}
      </svg>
      <span className={app.running ? "mt-4 size-2 rounded-full bg-[#2a0a02]" : "mt-4 size-2"} />
      {app.badge && (
        <span className="absolute -top-2.5 -right-3 flex h-9 w-[42px] items-center justify-center rounded-full bg-[#fa3e38] text-[20px] text-white">
          {app.badge}
        </span>
      )}
    </button>
  );
}

function Dock() {
  return (
    <div className="mx-[83px] mb-2.5 flex h-[122px] shrink-0 rounded-[34px] border-2 border-[#c09f78] bg-[linear-gradient(90deg,#9b7e58_0%,#9b7e58_28%,#d37858_34%,#d87a58_37%,#a1825e_43%,#a8845e_47%,#dc9b59_52%,#e0b657_59%,#e4ba58_65%,#ef7c58_71%,#ef7c58_75%,#cf7a58_82%,#ab7d57_89%,#9c7e57_100%)] px-4 pt-[18px]">
      <div className="flex flex-1 justify-between">
        {dockApps.map((app) => (
          <DockIcon key={app.name} app={app} />
        ))}
      </div>
      <div className="mr-8 ml-[37px] h-[90px] w-0.5 -translate-y-1 bg-[#9c4a2c]" />
      <div className="flex w-[275px] justify-between">
        {officeApps.map((app) => (
          <DockIcon key={app.name} app={app} />
        ))}
      </div>
      <div className="mr-[35px] ml-9 h-[90px] w-0.5 -translate-y-1 bg-[#75552f]" />
      <button type="button" aria-label="Bin" className="flex items-start">
        <svg width="74" height="86" viewBox="0 0 74 86" className="-mt-2.5">
          <path d="M6 16 14 5l8 5 6-8 9 7 10-7 6 8 8-4 7 12z" fill="#e8e8e8" />
          <path d="m14 10 8 8 6-9 8 10 10-9 4 9 10-6" fill="none" stroke="#5d6268" strokeWidth="2.500" />
          <path d="m30 10 5 5-4 4zM48 10l5 3-4 5z" fill="#2ba8b8" />
          <path d="M44 14h6v5h-6z" fill="#e06a2c" />
          <path d="M5 16c10 6 54 6 64 0l-7 62c-1 9-49 9-50 0z" fill="#dcdcdc" opacity=".94" />
          <path d="M5 16c10 6 54 6 64 0" fill="none" stroke="#fff" strokeWidth="2" />
          <path d="M18 26c10 10 4 30 8 50M40 28c-8 16 10 28 2 48M58 24c-8 14 0 30-6 50" fill="none" stroke="#ececec" strokeWidth="5" />
        </svg>
      </button>
    </div>
  );
}

export default function App() {
  return (
    <div className="flex h-screen flex-col overflow-hidden bg-[linear-gradient(90deg,#5a3f17_0%,#5a3f17_32%,#bb431c_37%,#c2451c_42%,#553a18_45%,#df6420_48%,#e0661f_50%,#c59a2a_53%,#9b7f55_57%,#dd9a22_62%,#9a6a48_66%,#e3461c_68%,#e3461c_72%,#7c411a_75%,#5e411a_85%,#5e411a_97%,#a8431b_100%)] font-[Inter]">
      <div className="flex min-h-0 flex-1 flex-col bg-[linear-gradient(90deg,#583c15,#62441a)]">
        <MenuBar />
        <div className="flex min-h-0 flex-1 flex-col overflow-hidden rounded-[20px]">
          <TitleBar />
          <div className="shrink-0 bg-gradient-to-b from-[#f7f7f7] to-[#ebebeb]">
            <RibbonTabs />
            <div className="flex h-[146px] pt-1.5">
              <ClipboardGroup />
              <FontGroup />
              <AlignmentGroup />
              <WrapGroup />
              <NumberGroup />
              <StylesGroup />
              <CellsGroup />
              <EditingGroup />
              <AnalyseButton />
            </div>
          </div>
          <FormulaBar />
          <div className="h-1 shrink-0 bg-[#f4f4f4]" />
          <Sheet />
          <SheetTabs />
          <StatusBar />
        </div>
      </div>
      <div className="h-1 shrink-0 bg-black/60" />
      <Dock />
    </div>
  );
}
